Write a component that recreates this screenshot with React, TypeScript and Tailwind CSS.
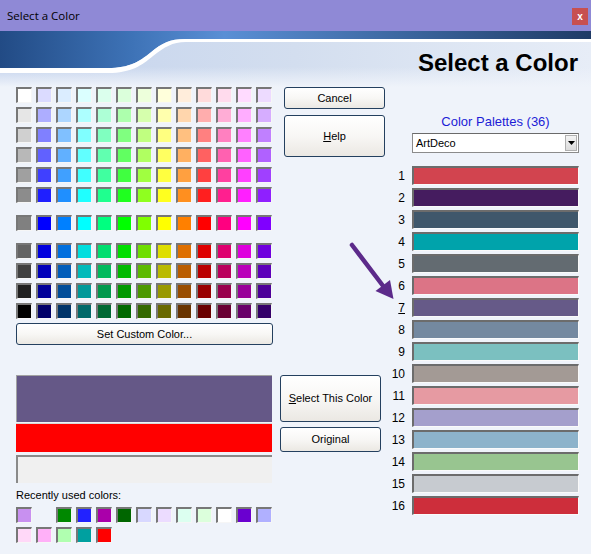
import React from "react";

const pure: number[][] = [
  [0, 0, 255], [0, 128, 255], [0, 255, 255], [0, 255, 128], [0, 255, 0], [128, 255, 0],
  [255, 255, 0], [255, 128, 0], [255, 0, 0], [255, 0, 128], [255, 0, 255], [128, 0, 255],
];
const hex = (c: number[]) =>
  "#" + c.map((v) => Math.max(0, Math.min(255, Math.round(v))).toString(16).padStart(2, "0")).join("");
const tintRow = (w: number, g: number) => [hex([g, g, g]), ...pure.map((p) => hex(p.map((c) => c + (255 - c) * w)))];
const shadeRow = (f: number, g: number) => [hex([g, g, g]), ...pure.map((p) => hex(p.map((c) => c * f)))];

const group1 = [
  tintRow(0.86, 255), tintRow(0.68, 230), tintRow(0.5, 208),
  tintRow(0.38, 184), tintRow(0.25, 160), tintRow(0.12, 140),
];
const group2 = [shadeRow(1, 128)];
const group3 = [shadeRow(0.87, 100), shadeRow(0.73, 64), shadeRow(0.6, 32), shadeRow(0.41, 0)];

const palette = [
  "#d2444f", "#451c5f", "#3f576b", "#00a3ab", "#636b71", "#dc7486", "#665a88", "#7489a0",
  "#7bc0c0", "#a39a95", "#e69aa2", "#a49fcc", "#8db3cb", "#98c590", "#c7cbd0", "#cd2e3b",
];

const recent1: (string | null)[] = [
  "#c890f0", null, "#008800", "#2222ff", "#aa00aa", "#006600", "#d8d8ff", "#ecdcff",
  "#dcfff0", "#dcffdc", "#ffffff", "#6a00d0", "#b0b0ff",
];
const recent2 = ["#ffd8f8", "#ffb0f8", "#b0ffb0", "#00a0a0", "#ff0000"];

const font = { fontFamily: '"Liberation Sans", Arial, sans-serif' };

function Cell({ color }: { color: string | null }) {
  if (!color) return <div className="w-4 h-4" />;
  return (
    <div
      className="w-4 h-4 border-t-2 border-l-2 border-r border-b border-t-[#777777] border-l-[#777777] border-r-[#f6f6f6] border-b-[#f6f6f6]"
      style={{ backgroundColor: color }}
    />
  );
}

function Btn({ children, className }: { children: React.ReactNode; className: string }) {
  return (
    <div
      className={
        "flex items-center justify-center rounded-[3px] border border-[#24405f] bg-linear-to-b from-white via-[#f8f7f5] to-[#ebe8e3] text-[11px] text-black " +
        className
      }
    >
      {children}
    </div>
  );
}

export default function App() {
  return (
    <div className="relative w-[591px] h-[554px] overflow-hidden bg-[#eff3fa]" style={font}>
      {/* title bar */}
      <div className="flex h-[31px] bg-[#8f89d6]">
        <div
          className="flex-1 pl-[7px] pt-[7px] text-[11.5px] text-black"
          style={{ fontFamily: '"Open Sans", "Noto Sans", sans-serif' }}
        >
          Select a Color
        </div>
        <div className="mt-[8px] mr-[3px] flex h-[17px] w-[16px] items-center justify-center bg-[#c75050] text-[10px] font-bold leading-none text-white">
          x
        </div>
      </div>

      {/* header */}
      <div className="relative h-[56px]">
        <svg className="absolute inset-0 h-full w-full" viewBox="0 0 591 56" preserveAspectRatio="none">
          <defs>
            <linearGradient id="lightbg" x1="0" y1="0" x2="1" y2="0">
              <stop offset="0" stopColor="#c4d3ed" />
              <stop offset="0.5" stopColor="#d3deef" />
              <stop offset="1" stopColor="#e7edf7" />
            </linearGradient>
            <linearGradient id="fade" x1="0" y1="0" x2="0" y2="1">
              <stop offset="0" stopColor="#eff3fa" stopOpacity="0" />
              <stop offset="1" stopColor="#eff3fa" stopOpacity="1" />
            </linearGradient>
            <linearGradient id="blue" x1="0" y1="0" x2="1" y2="0">
              <stop offset="0" stopColor="#224b85" />
              <stop offset="0.22" stopColor="#3d72b6" />
              <stop offset="0.38" stopColor="#5a8fd5" />
              <stop offset="0.7" stopColor="#3a649c" />
              <stop offset="1" stopColor="#1f3b66" />
            </linearGradient>
          </defs>
          <rect x="0" y="0" width="591" height="56" fill="url(#lightbg)" />
          <rect x="0" y="36" width="591" height="20" fill="url(#fade)" />
          <path d="M0,0 H591 V8 H185 C170,8 162,12 150,22 C140,30 130,37 108,37 H0 Z" fill="url(#blue)" />
          <path
            d="M0,37 H108 C130,37 140,30 150,22 C162,12 170,8 185,8 H591 V11 H186 C172,11 165,16 153,25 C142,34 132,42 108,42 H0 Z"
            fill="#ffffff"
          />
        </svg>
        <div className="relative flex justify-end pr-[13px] pt-[20px]">
          <span className="text-[24px] font-bold leading-none text-black">Select a Color</span>
        </div>
      </div>

      {/* body */}
      <div className="flex pl-[16px]">
        {/* left column */}
        <div className="flex w-[257px] flex-col">
          <div className="flex flex-col gap-[12px]">
            {[group1, group2, group3].map((g, gi) => (
              <div key={gi} className="flex flex-col gap-[4px]">
                {g.map((row, ri) => (
                  <div key={ri} className="flex gap-[4px]">
                    {row.map((c, ci) => (
                      <Cell key={ci} color={c} />
                    ))}
                  </div>
                ))}
              </div>
            ))}
          </div>
          <Btn className="mt-[4px] h-[22px] w-[257px]">Set Custom Color...</Btn>

          <div className="mt-[30px] h-[47px] w-[256px] border-t border-l border-[#a2a2a2] bg-[#655887]" />
          <div className="mt-[1px] h-[29px] w-[256px] border-t border-[#d8d8d8] bg-[#ff0000]" />
          <div className="mt-[3px] h-[28px] w-[256px] border-t-2 border-l-2 border-t-[#8a8a8a] border-l-[#8a8a8a] bg-[#f0f0f0]" />

          <div className="mt-[5px] h-[14px] text-[11px] leading-[14px] text-black">Recently used colors:</div>
          <div className="mt-[5px] flex flex-col gap-[4px]">
            <div className="flex gap-[4px]">
              {recent1.map((c, i) => (
                <Cell key={i} color={c} />
              ))}
            </div>
            <div className="flex gap-[4px]">
              {recent2.map((c, i) => (
                <Cell key={i} color={c} />
              ))}
            </div>
          </div>
        </div>

        {/* middle column */}
        <div className="ml-[7px] flex w-[105px] flex-col">
          <Btn className="ml-[4px] h-[22px] w-[101px]">Cancel</Btn>
          <Btn className="ml-[4px] mt-[6px] h-[42px] w-[101px]">
            <span>
              <span className="underline">H</span>elp
            </span>
          </Btn>
          <Btn className="mt-[218px] h-[47px] w-[101px]">
            <span>
              <span className="underline">S</span>elect This Color
            </span>
          </Btn>
          <Btn className="mt-[5px] h-[25px] w-[101px]">Original</Btn>
        </div>

        {/* right column */}
        <div className="ml-[3px] flex w-[191px] flex-col pt-[27px]">
          <div className="ml-[24px] w-[167px] text-center text-[13px] leading-[16px] text-[#1c1cd6]">
            Color Palettes (36)
          </div>
          <div className="ml-[24px] mt-[3px] flex h-[20px] w-[167px] items-center border border-[#8b8b8b] border-t-[#6a6a6a] bg-white">
            <span className="flex-1 pl-[3px] text-[11px] text-black">ArtDeco</span>
            <div className="mr-[1px] flex h-[16px] w-[12px] items-center justify-center border border-[#b0b0b0] bg-linear-to-b from-[#f4f4f4] to-[#dcdcdc]">
              <svg width="7" height="4" viewBox="0 0 7 4">
                <path d="M0,0 H7 L3.5,4 Z" fill="#000" />
              </svg>
            </div>
          </div>
          <div className="mt-[13px] flex flex-col gap-[3px]">
            {palette.map((c, i) => (
              <div key={i} className="flex h-[19px] items-center">
                <div className="w-[17px] text-right text-[12px] leading-none text-black">
                  {i === 6 ? <span className="underline">7</span> : i + 1}
                </div>
                <div
                  className="ml-[7px] h-[19px] w-[167px] border-t-2 border-l-2 border-r border-b border-t-[#6c6c6c] border-l-[#6c6c6c] border-r-[#fafafa] border-b-[#fafafa]"
                  style={{ backgroundColor: c }}
                />
              </div>
            ))}
          </div>
        </div>
      </div>

      {/* annotation arrow */}
      <svg className="absolute left-[344px] top-[238px] h-[66px] w-[56px]" viewBox="344 238 56 66">
        <line x1="352" y1="245" x2="383.5" y2="286.5" stroke="#5c2a8a" strokeWidth="4.5" strokeLinecap="round" />
        <path d="M393.5,299 L375.5,291 L390,280 Z" fill="#5c2a8a" />
      </svg>
    </div>
  );
}
